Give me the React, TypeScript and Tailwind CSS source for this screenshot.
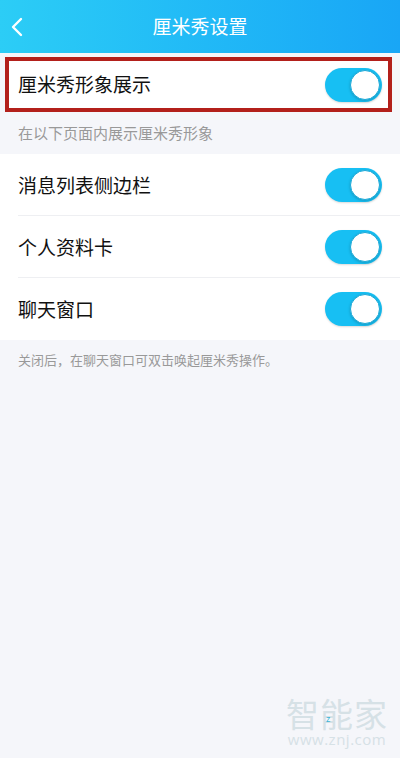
import React from "react";

const font = { fontFamily: '"Noto Sans CJK SC", "Noto Sans", sans-serif' };

function Toggle() {
  return (
    <div className="relative h-[34px] w-[57px] rounded-full bg-[#17bff3] shadow-[0_1px_2px_rgba(0,0,0,0.15)]">
      <div className="absolute right-[2px] top-[2px] h-[30px] w-[30px] rounded-full border-[1.5px] border-[#1aa9d8] bg-white shadow-[0_1px_3px_rgba(0,0,0,0.2)]" />
    </div>
  );
}

function Row({ label, divider }: { label: string; divider?: boolean }) {
  return (
    <div className="relative flex h-[62px] items-center justify-between pl-[18px] pr-[18px]">
      <span className="text-[19px] text-[#111]">{label}</span>
      <Toggle />
      {divider && <div className="absolute bottom-0 left-[18px] right-0 h-px bg-[#eeeff2]" />}
    </div>
  );
}

export default function App() {
  return (
    <div style={font} className="relative flex h-[758px] w-[400px] flex-col overflow-hidden bg-[#f5f6fa]">
      <div className="relative flex h-[53px] items-center justify-center bg-gradient-to-r from-[#2ccdf6] to-[#19a6f6]">
        <svg className="absolute left-[9px] top-[17px]" width="16" height="20" viewBox="0 0 16 20">
          <path d="M12 2 L4 10 L12 18" fill="none" stroke="#fff" strokeWidth="2.4" strokeLinecap="round" strokeLinejoin="round" />
        </svg>
        <span className="text-[19px] text-white">厘米秀设置</span>
      </div>

      <div className="ml-[5px] mr-[8px] mt-[4px] flex h-[55px] items-center justify-between border-[4px] border-[#b3201b] bg-white pl-[9px] pr-[6px]">
        <span className="text-[19px] text-[#111]">厘米秀形象展示</span>
        <Toggle />
      </div>

      <div className="flex h-[42px] items-center pl-[18px] text-[15px] text-[#999]">在以下页面内展示厘米秀形象</div>

      <div className="bg-white">
        <Row label="消息列表侧边栏" divider />
        <Row label="个人资料卡" divider />
        <Row label="聊天窗口" />
      </div>

      <div className="flex h-[40px] items-center pl-[18px] text-[13px] text-[#999]">关闭后，在聊天窗口可双击唤起厘米秀操作。</div>

      <div className="absolute bottom-[11px] right-[12px] flex flex-col items-center gap-[3px]">
        <div className="relative text-[33px] leading-[30px] tracking-[1px] text-[#d6e1e6]">
          智能家
          <span className="absolute left-[40px] top-[16px] text-[9px] leading-none text-[#3db6d8]">z</span>
        </div>
        <div className="text-[15px] leading-[16px] tracking-[0.5px] text-[#d6e1e6]" style={{ fontFamily: '"Open Sans", sans-serif' }}>www.znj.com</div>
      </div>
    </div>
  );
}
